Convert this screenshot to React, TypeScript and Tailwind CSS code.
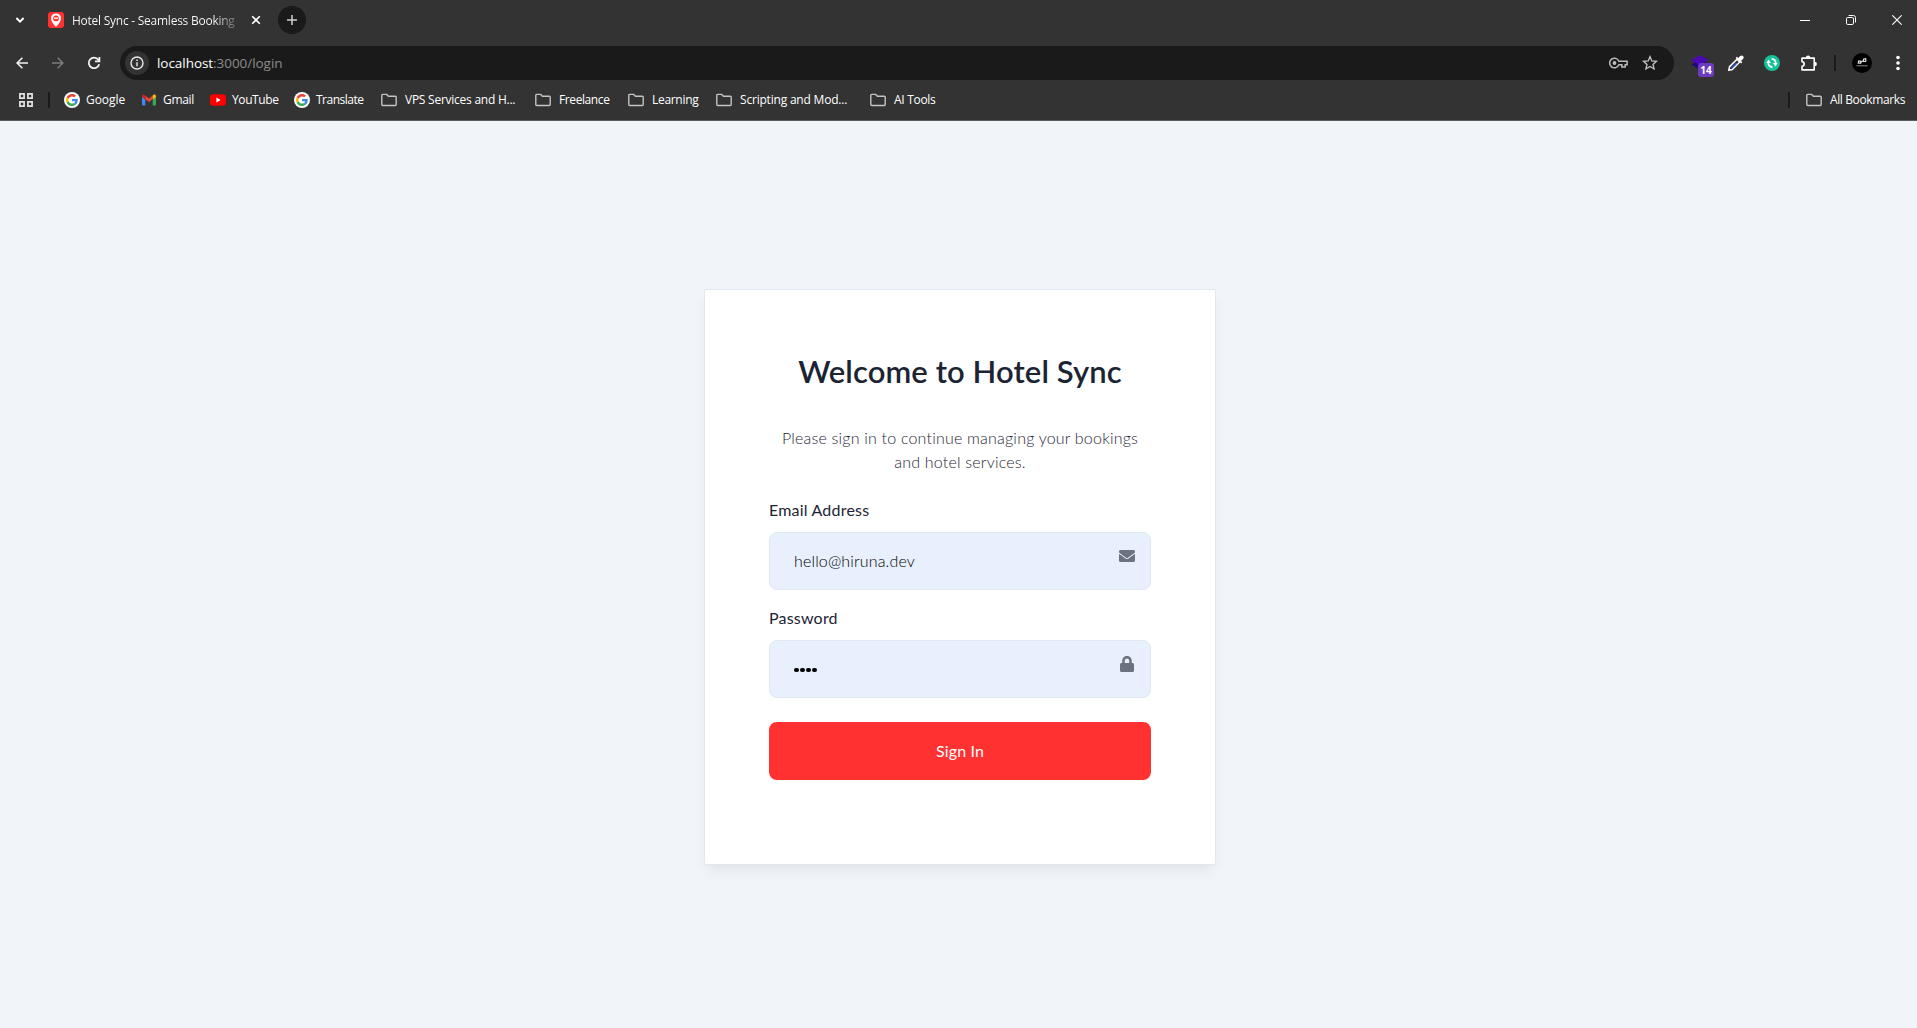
import type { ReactNode } from "react";
import { FaEnvelope, FaLock } from "react-icons/fa";

function Favicon() {
  return (
    <svg width="16" height="16" viewBox="0 0 16 16" className="shrink-0">
      <rect width="16" height="16" rx="3" fill="#ff3131" />
      <path d="M8 1.400a5 5 0 0 0-5 5C3 9.800 8 14.800 8 14.800s5-5 5-8.400A5 5 0 0 0 8 1.400Z" fill="#fff" />
      <circle cx="8" cy="6.400" r="2.900" fill="#ff3131" />
      <path d="M5.800 6.200h4.400" stroke="#fff" strokeWidth="1.300" />
    </svg>
  );
}

function GoogleIcon() {
  return (
    <svg width="16" height="16" viewBox="0 0 16 16" className="shrink-0">
      <circle cx="8" cy="8" r="8" fill="#fff" />
      <g transform="translate(2 2) scale(.25)">
        <path fill="#EA4335" d="M24 9.500c3.540 0 6.710 1.220 9.210 3.600l6.850-6.850C35.900 2.380 30.470 0 24 0 14.620 0 6.510 5.380 2.560 13.220l7.980 6.190C12.430 13.720 17.740 9.500 24 9.500z" />
        <path fill="#4285F4" d="M46.980 24.550c0-1.570-.15-3.090-.38-4.550H24v9.020h12.940c-.58 2.960-2.260 5.480-4.780 7.180l7.730 6c4.510-4.180 7.090-10.360 7.090-17.650z" />
        <path fill="#FBBC05" d="M10.530 28.590A14.500 14.500 0 0 1 9.770 24c0-1.600.27-3.140.76-4.590l-7.980-6.190A23.900 23.900 0 0 0 0 24c0 3.880.92 7.540 2.560 10.780l7.970-6.190z" />
        <path fill="#34A853" d="M24 48c6.480 0 11.930-2.130 15.890-5.810l-7.730-6c-2.150 1.450-4.920 2.300-8.160 2.300-6.260 0-11.570-4.220-13.470-9.910l-7.980 6.190C6.510 42.620 14.620 48 24 48z" />
      </g>
    </svg>
  );
}

function GmailIcon() {
  return (
    <svg width="16" height="16" viewBox="0 0 16 16" className="shrink-0">
      <path d="M1 4.300 4.300 6.700V13.500H2a1 1 0 0 1-1-1Z" fill="#4285f4" />
      <path d="M15 4.300 11.700 6.700V13.500H14a1 1 0 0 0 1-1Z" fill="#34a853" />
      <path d="M4.300 3.600 8 6.400l3.700-2.800v3.700L8 10.100 4.300 7.300Z" fill="#ea4335" />
      <path d="M1 4.100c0-1.400 1.500-2.100 2.600-1.300l.7.600v4L1 5Z" fill="#c5221f" />
      <path d="M15 4.100c0-1.400-1.500-2.100-2.600-1.300l-.7.600v4L15 5Z" fill="#fbbc04" />
    </svg>
  );
}

function YouTubeIcon() {
  return (
    <svg width="16" height="16" viewBox="0 0 16 16" className="shrink-0">
      <rect y="2.300" width="16" height="11.400" rx="3" fill="#f00" />
      <path d="M6.400 5.600v4.800L10.600 8Z" fill="#fff" />
    </svg>
  );
}

function FolderIcon() {
  return (
    <svg width="16" height="16" viewBox="0 0 16 16" fill="none" className="shrink-0">
      <path d="M.8 3.300c0-.6.300-.9.900-.9h4l1.700 1.800h6.900c.6 0 .9.300.9.900v7.500c0 .6-.3.900-.9.900H1.700c-.6 0-.9-.3-.9-.9Z" stroke="#c4c4c4" strokeWidth="1.400" />
    </svg>
  );
}

type BookmarkProps = { icon: ReactNode; label: string; className: string };

function Bookmark({ icon, label, className }: BookmarkProps) {
  return (
    <div className={`flex shrink-0 items-center ${className}`}>
      {icon}
      <span className="whitespace-nowrap">{label}</span>
    </div>
  );
}

const bookmarks: BookmarkProps[] = [
  { icon: <GoogleIcon />, label: "Google", className: "w-[77px] gap-1.5 tracking-[-0.05px]" },
  { icon: <GmailIcon />, label: "Gmail", className: "w-[69px] gap-1.5 tracking-[-0.3px]" },
  { icon: <YouTubeIcon />, label: "YouTube", className: "w-[84px] gap-1.5 tracking-[-0.4px]" },
  { icon: <GoogleIcon />, label: "Translate", className: "w-[87px] gap-1.5 tracking-[-0.5px]" },
  { icon: <FolderIcon />, label: "VPS Services and H...", className: "w-[154px] gap-2 tracking-[-0.25px]" },
  { icon: <FolderIcon />, label: "Freelance", className: "w-[93px] gap-2 tracking-[-0.4px]" },
  { icon: <FolderIcon />, label: "Learning", className: "w-[88px] gap-2 tracking-[-0.3px]" },
  { icon: <FolderIcon />, label: "Scripting and Mod...", className: "w-[154px] gap-2 tracking-[-0.2px]" },
  { icon: <FolderIcon />, label: "AI Tools", className: "gap-2 tracking-[-0.3px]" },
];

function TabStrip() {
  return (
    <div className="flex h-10 items-center">
      <svg width="10" height="10" viewBox="0 0 10 10" fill="none" className="ml-[15px]">
        <path d="m1.400 3 3.600 3.600L8.600 3" stroke="#fff" strokeWidth="1.900" />
      </svg>
      <div className="ml-[23px] flex w-[230px] items-center">
        <Favicon />
        <div className="mt-px ml-2 w-[167px] whitespace-nowrap bg-gradient-to-r from-white from-85% to-[#555555] bg-clip-text text-xs tracking-[-0.25px] text-transparent">
          Hotel Sync - Seamless Booking
        </div>
        <svg width="10" height="10" viewBox="0 0 10 10" fill="none" className="ml-[12px]">
          <path d="m1.200 1.200 7.600 7.600M8.800 1.200 1.200 8.800" stroke="#fff" strokeWidth="1.600" />
        </svg>
      </div>
      <div className="flex size-7 items-center justify-center rounded-full bg-[#1a1a1a]">
        <svg width="12" height="12" viewBox="0 0 12 12" fill="none">
          <path d="M6 1v10M1 6h10" stroke="#d0d0d0" strokeWidth="1.500" />
        </svg>
      </div>
      <div className="mr-[15px] ml-auto flex items-center gap-9">
        <svg width="10" height="10" viewBox="0 0 10 10">
          <path d="M0 5.500h10" stroke="#fff" />
        </svg>
        <svg width="10" height="10" viewBox="0 0 10 10" fill="none" stroke="#fff">
          <rect x=".5" y="2.500" width="7" height="7" rx="1.300" />
          <path d="M2.600.5h4.700A2.200 2.200 0 0 1 9.500 2.700v4.700" />
        </svg>
        <svg width="10" height="10" viewBox="0 0 10 10">
          <path d="m.3.300 9.400 9.400M9.700.3.300 9.700" stroke="#fff" strokeWidth="1.100" />
        </svg>
      </div>
    </div>
  );
}

function Toolbar() {
  return (
    <div className="flex h-[46px] items-center">
      <svg width="12" height="12" viewBox="0 0 12 12" fill="none" className="ml-4" stroke="#f2f2f2" strokeWidth="1.600">
        <path d="M12 6H1.200M6.400.7 1.100 6l5.300 5.300" />
      </svg>
      <svg width="12" height="12" viewBox="0 0 12 12" fill="none" className="ml-6" stroke="#7d7d7d" strokeWidth="1.500">
        <path d="M0 6h10.800M5.600.7 10.900 6l-5.300 5.300" />
      </svg>
      <svg width="14" height="14" viewBox="0 0 14 14" fill="none" className="ml-[23px]" stroke="#f5f5f5" strokeWidth="1.800">
        <path d="M12.200 8.200A5.300 5.300 0 1 1 11.300 3.700L12.400 5" />
        <path d="M12.400.9V5.300H8" />
      </svg>
      <div className="ml-[19px] flex h-[34px] w-[1554px] items-center rounded-full bg-[#1a1a1a] pl-[5px]">
        <div className="flex size-6 items-center justify-center rounded-full bg-[#333333]">
          <svg width="14" height="14" viewBox="0 0 14 14" fill="none" stroke="#e8e8e8" strokeWidth="1.400">
            <circle cx="7" cy="7" r="6" />
            <path d="M7 6.200v4M7 3.600v1.500" />
          </svg>
        </div>
        <div className="ml-2 text-[13.5px] tracking-[-0.05px] text-[#8c8c8c]">
          <span className="text-white">localhost</span>:3000/login
        </div>
        <svg width="19" height="12" viewBox="0 0 19 12" fill="none" className="ml-auto" stroke="#bdbdbd" strokeWidth="1.500">
          <path d="M9.900 4.200A4.800 4.800 0 1 0 9.900 7.800H12.800V10H16.200V7.800H18.100V4.200Z" />
          <circle cx="5.500" cy="6" r="1.900" fill="#bdbdbd" stroke="none" />
        </svg>
        <svg width="16" height="16" viewBox="0 0 16 16" fill="none" className="mr-4 ml-[14px]" stroke="#c4c4c4" strokeWidth="1.300">
          <path d="m8 1.600 1.800 4.300 4.700.4L11 9.400l1.100 4.600L8 11.500 3.900 14 5 9.400 1.500 6.300l4.700-.4Z" />
        </svg>
      </div>
      <div className="relative ml-[17px] h-[22px] w-[23px]">
        <svg width="18" height="16" viewBox="0 0 18 16" className="absolute top-[3px] left-0">
          <path d="m9 4 8.500 5L9 14.500.5 9.500Z" fill="#24047a" />
          <path d="m9 0 8.500 5L9 10.200 0 5.400Z" fill="#4a09b5" />
        </svg>
        <div className="absolute top-[11px] left-[7px] flex h-[14px] w-4 items-center justify-center rounded-[3px] bg-[#6c3cc0] text-[10px] leading-none font-bold text-white">
          14
        </div>
      </div>
      <svg width="16" height="16" viewBox="0 0 16 16" className="ml-[14px]">
        <path d="M9 4.300 1.500 11.700.8 15.200l3.500-.7L11.700 7Z" fill="#333" stroke="#fff" strokeWidth="1.500" />
        <path d="M7.400 8 2.600 12.800l.6.600 1 .1L9.800 8Z" fill="#3355c8" />
        <path d="m7.600 2.900 5.500 5.500 1.200-1.200-1.300-1.300 2-2a1.900 1.900 0 0 0-2.800-2.800l-2.100 2-1.300-1.300Z" fill="#fff" />
      </svg>
      <svg width="16" height="16" viewBox="0 0 16 16" className="ml-5" fill="none">
        <circle cx="8" cy="8" r="8" fill="#15c39a" />
        <path d="M8.500 12.200C5.500 12 4 10 4.300 7M7.500 3.800c3 .2 4.500 2.200 4.200 5.200" stroke="#fff" strokeWidth="1.800" />
        <path d="M2.300 7.900 4.600 4.400 7.100 7.900ZM13.700 8.100l-2.300 3.500-2.500-3.500Z" fill="#fff" />
      </svg>
      <svg width="18" height="18" viewBox="0 0 18 18" className="ml-5" fill="none">
        <path d="M2 4.100h12.200v11.800H2v-3.700c2.900-.2 2.900-4.200 0-4.400Z" stroke="#fff" strokeWidth="1.600" strokeLinejoin="round" />
        <path d="M5.900 3.700a2.200 2.200 0 0 1 4.400 0ZM14.700 7.800a2.200 2.200 0 0 1 0 4.400Z" fill="#fff" />
      </svg>
      <div className="ml-4 h-4 w-0.5 bg-[#1a1a1a]" />
      <svg width="20" height="20" viewBox="0 0 20 20" className="ml-4" fill="none">
        <circle cx="10" cy="10" r="10" fill="#000" />
        <path d="M6.500 8.200h2.200v2H6.300ZM8.700 9.300l3-1.800M11.500 6.200l2.200-.5v2.800h-2.200Z" stroke="#ddd" strokeWidth="1.200" />
        <path d="M4.500 12.800h11" stroke="#999" strokeWidth=".9" />
      </svg>
      <svg width="4" height="16" viewBox="0 0 4 16" className="ml-6" fill="#fff">
        <circle cx="2" cy="2.500" r="1.800" />
        <circle cx="2" cy="8" r="1.800" />
        <circle cx="2" cy="13.500" r="1.800" />
      </svg>
    </div>
  );
}

function BookmarksBar() {
  return (
    <div className="flex h-7 items-center text-xs text-white">
      <svg width="14" height="14" viewBox="0 0 14 14" fill="none" className="ml-[19px]" stroke="#e3e3e3" strokeWidth="1.700">
        <path d="M.9.900h4.200v4.200H.9ZM8.900.9h4.200v4.200H8.900ZM.9 8.900h4.200v4.200H.9ZM8.900 8.900h4.200v4.200H8.900Z" />
      </svg>
      <div className="mr-[14px] ml-[15px] h-4 w-0.5 bg-[#1a1a1a]" />
      {bookmarks.map((b) => (
        <Bookmark key={b.label} {...b} />
      ))}
      <div className="ml-auto h-4 w-0.5 bg-[#1a1a1a]" />
      <Bookmark icon={<FolderIcon />} label="All Bookmarks" className="ml-4 w-[111px] gap-2 tracking-[-0.38px]" />
    </div>
  );
}

type FieldProps = { label: string; icon: ReactNode; children: ReactNode };

function Field({ label, icon, children }: FieldProps) {
  return (
    <div className="mb-4">
      <div className="mb-2.5 h-6 leading-6 tracking-[0.2px] text-[#1c2434]">{label}</div>
      <div className="flex h-[58px] items-center justify-between rounded-lg border border-[#e2e8f0] bg-[#e8f0fe] pr-[15px] pl-6">
        {children}
        <span className="mb-2.5 text-[#6b7280]">{icon}</span>
      </div>
    </div>
  );
}

function LoginCard() {
  return (
    <main className="flex h-[576px] w-[512px] flex-col rounded-[2px] border border-[#e2e8f0] bg-white px-16 pt-[59px] font-['Lato',sans-serif] text-base shadow-[0_8px_13px_-3px_rgba(0,0,0,0.07)] [font-variant-ligatures:none]">
      <h1 className="h-11 text-center text-[31px] leading-[44px] font-semibold tracking-[0.1px] whitespace-nowrap text-[#1c2434]">
        Welcome to Hotel Sync
      </h1>
      <p className="mt-[33px] mb-6 text-center leading-6 font-light tracking-[0.2px] text-[#1f2937]">
        Please sign in to continue managing your bookings
        <br />
        and hotel services.
      </p>
      <Field label="Email Address" icon={<FaEnvelope size={16} />}>
        <span className="font-light tracking-[0.15px] text-black">hello@hiruna.dev</span>
      </Field>
      <Field label="Password" icon={<FaLock size={16} />}>
        <span className="flex gap-[1.5px] pt-0.5">
          {[0, 1, 2, 3].map((i) => (
            <span key={i} className="size-[4.500px] rounded-full bg-black" />
          ))}
        </span>
      </Field>
      <button className="mt-2 h-[58px] rounded-lg bg-[#ff3131] tracking-[0.15px] text-white">Sign In</button>
    </main>
  );
}

export default function App() {
  return (
    <div className="flex h-[1028px] w-[1917px] flex-col overflow-hidden bg-[#f1f5f9] font-['Open_Sans',sans-serif]">
      <header className="h-[121px] border-b border-[#5c5c5c] bg-[#333333]">
        <TabStrip />
        <Toolbar />
        <BookmarksBar />
      </header>
      <div className="flex justify-center pt-[168px] pl-[3px]">
        <LoginCard />
      </div>
    </div>
  );
}
